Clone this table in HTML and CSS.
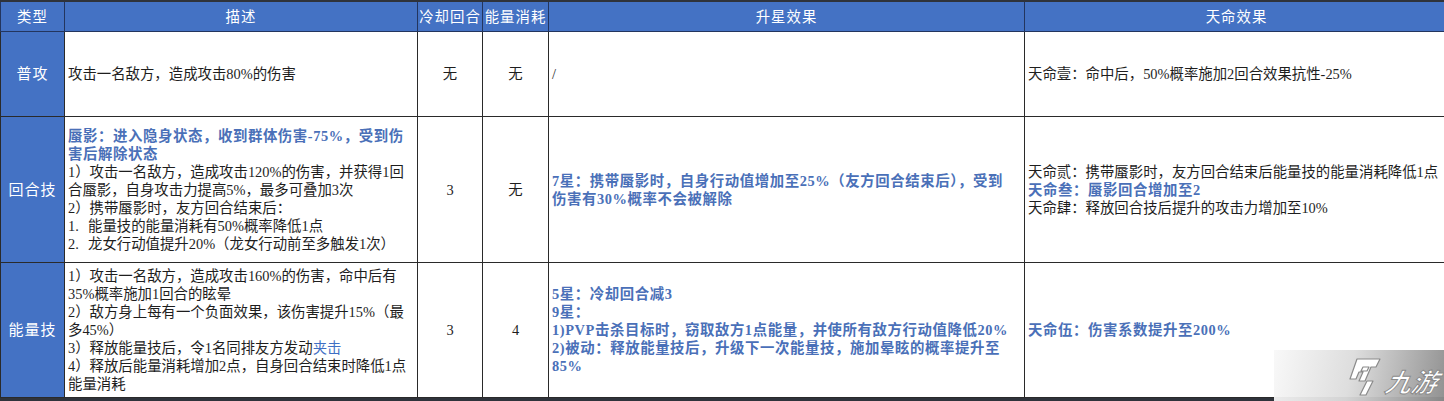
FILE: index.html
```html
<!DOCTYPE html>
<html lang="zh">
<head>
<meta charset="utf-8">
<link rel="stylesheet" href="styles.css">
</head>
<body>
<div class="page">
  <table class="skills">
    <colgroup>
      <col class="c-type"><col class="c-desc"><col class="c-cd"><col class="c-en"><col class="c-star"><col class="c-fate">
    </colgroup>
    <thead>
      <tr>
        <th>类型</th><th>描述</th><th>冷却回合</th><th>能量消耗</th><th>升星效果</th><th>天命效果</th>
      </tr>
    </thead>
    <tbody>
      <tr class="r1">
        <td class="type">普攻</td>
        <td class="txt">攻击一名敌方，造成攻击80%的伤害</td>
        <td class="mid">无</td>
        <td class="mid">无</td>
        <td class="txt">/</td>
        <td class="txt">天命壹：命中后，50%概率施加2回合效果抗性-25%</td>
      </tr>
      <tr class="r2">
        <td class="type">回合技</td>
        <td class="txt"><span class="hl">蜃影：进入隐身状态，收到群体伤害-75%，受到伤<br>害后解除状态</span><br>1）攻击一名敌方，造成攻击120%的伤害，并获得1回<br>合蜃影，自身攻击力提高5%，最多可叠加3次<br>2）携带蜃影时，友方回合结束后：<br><span class="num">1.</span>能量技的能量消耗有50%概率降低1点<br><span class="num">2.</span>龙女行动值提升20%（龙女行动前至多触发1次）</td>
        <td class="mid">3</td>
        <td class="mid">无</td>
        <td class="txt"><span class="hl">7星：携带蜃影时，自身行动值增加至25%（友方回合结束后），受到<br>伤害有30%概率不会被解除</span></td>
        <td class="txt">天命贰：携带蜃影时，友方回合结束后能量技的能量消耗降低1点<br><span class="hl">天命叁：蜃影回合增加至2</span><br>天命肆：释放回合技后提升的攻击力增加至10%</td>
      </tr>
      <tr class="r3">
        <td class="type">能量技</td>
        <td class="txt">1）攻击一名敌方，造成攻击160%的伤害，命中后有<br>35%概率施加1回合的眩晕<br>2）敌方身上每有一个负面效果，该伤害提升15%（最<br>多45%）<br>3）释放能量技后，令1名同排友方发动<span class="link">夹击</span><br>4）释放后能量消耗增加2点，自身回合结束时降低1点<br>能量消耗</td>
        <td class="mid">3</td>
        <td class="mid">4</td>
        <td class="txt"><span class="hl">5星：冷却回合减3<br>9星：<br>1)PVP击杀目标时，窃取敌方1点能量，并使所有敌方行动值降低20%<br>2)被动：释放能量技后，升级下一次能量技，施加晕眩的概率提升至<br>85%</span></td>
        <td class="txt"><span class="hl">天命伍：伤害系数提升至200%</span></td>
      </tr>
    </tbody>
  </table>
  <div class="watermark">
    <svg class="wm-logo" width="34" height="40" viewBox="0 0 34 40">
      <path d="M9 2 L32 2 L28 10 L23 10 L17 24 L11 24 L15 15 L11 15 L8 22 L2 22 Z M15 10 L21 10 L19 14 L13 14 Z" fill="#fff" stroke="#8a8a8a" stroke-width="1.2" stroke-linejoin="round"/>
      <path d="M19 24 L25 24 L18 38 L12 38 Z" fill="#fff" stroke="#8a8a8a" stroke-width="1.2" stroke-linejoin="round"/>
    </svg>
    <span class="wm-text">九游</span>
  </div>
</div>
</body>
</html>
```
FILE: styles.css
```css
html, body {
  margin: 0;
  padding: 0;
  background: #ffffff;
}
.page {
  position: relative;
  width: 1444px;
  height: 401px;
  overflow: hidden;
  background: #2f333b;
  padding-top: 2px;
  box-sizing: border-box;
}
.skills {
  border-collapse: collapse;
  table-layout: fixed;
  width: 1448px;
  font-family: "Liberation Serif", "Noto Sans CJK SC", serif;
  font-size: 14.4px;
  line-height: 18px;
  color: #1e1e1e;
  background: #ffffff;
}
.c-type { width: 64px; }
.c-desc { width: 353px; }
.c-cd { width: 65px; }
.c-en { width: 66px; }
.c-star { width: 476px; }
.c-fate { width: 424px; }

.skills th {
  height: 29px;
  padding: 0;
  background: #4472c4;
  color: #ffffff;
  font-weight: normal;
  font-size: 14.4px;
  letter-spacing: 1px;
  text-align: center;
  vertical-align: middle;
  border: 1px solid #23355e;
  border-top: none;
}
.skills td {
  padding: 0 3px;
  border: 1px solid #2a2a2a;
  vertical-align: middle;
  white-space: nowrap;
  overflow: hidden;
}
.r1 td { height: 84px; }
.r2 td { height: 145px; }
.r3 td { height: 134px; }

.skills td.type {
  background: #4472c4;
  color: #ffffff;
  text-align: center;
  font-size: 15px;
  letter-spacing: 1px;
  padding: 0;
}
.skills td.mid {
  text-align: center;
}
.num {
  display: inline-block;
  width: 20px;
}
.hl {
  color: #4a70b8;
  font-weight: bold;
  letter-spacing: 0.6px;
}
.link {
  color: #3f6fc4;
}
.watermark {
  position: absolute;
  right: 0;
  bottom: 0;
  width: 170px;
  height: 51px;
  background: linear-gradient(100deg, rgba(248,248,248,0.95) 0%, rgba(220,220,220,0.95) 45%, rgba(140,140,140,0.95) 100%);
  display: flex;
  align-items: flex-end;
  justify-content: flex-end;
  padding: 0 6px 4px 0;
  box-sizing: border-box;
  gap: 4px;
}
.wm-logo {
  display: block;
}
.wm-text {
  font-family: "Noto Sans CJK SC", sans-serif;
  font-size: 26px;
  line-height: 32px;
  font-weight: bold;
  font-style: italic;
  color: #ffffff;
  -webkit-text-stroke: 1px #8a8a8a;
  transform: skewX(-12deg);
  display: inline-block;
}
```
